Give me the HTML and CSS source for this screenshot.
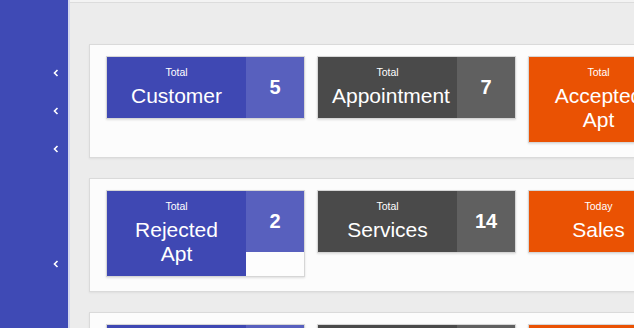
FILE: index.html
```html
<!DOCTYPE html>
<html lang="en">
<head>
  <meta charset="UTF-8">
  <meta name="viewport" content="width=device-width, initial-scale=1.0">
  <title>Dashboard</title>
  <link rel="stylesheet" href="styles.css">
</head>
<body>
  <div class="layout">
    <!-- collapsed side menu -->
    <aside class="sidebar">
      <ul class="menu">
        <li class="menu-item"><svg class="chevron" viewBox="0 0 6 8"><polyline points="4.5,1 1.5,4 4.5,7"/></svg></li>
        <li class="menu-item"><svg class="chevron" viewBox="0 0 6 8"><polyline points="4.5,1 1.5,4 4.5,7"/></svg></li>
        <li class="menu-item"><svg class="chevron" viewBox="0 0 6 8"><polyline points="4.5,1 1.5,4 4.5,7"/></svg></li>
        <li class="menu-item"></li>
        <li class="menu-item"></li>
        <li class="menu-item"><svg class="chevron" viewBox="0 0 6 8"><polyline points="4.5,1 1.5,4 4.5,7"/></svg></li>
      </ul>
    </aside>

    <main class="content">
      <div class="topline"></div>

      <section class="panel">
        <div class="stat-card blue">
          <div class="stat-label">
            <div class="stat-period">Total</div>
            <div class="stat-title">Customer</div>
          </div>
          <div class="stat-count">5</div>
        </div>
        <div class="stat-card dark">
          <div class="stat-label">
            <div class="stat-period">Total</div>
            <div class="stat-title">Appointment</div>
          </div>
          <div class="stat-count">7</div>
        </div>
        <div class="stat-card orange">
          <div class="stat-label">
            <div class="stat-period">Total</div>
            <div class="stat-title">Accepted Apt</div>
          </div>
          <div class="stat-count">3</div>
        </div>
      </section>

      <section class="panel">
        <div class="stat-card blue">
          <div class="stat-label">
            <div class="stat-period">Total</div>
            <div class="stat-title">Rejected Apt</div>
          </div>
          <div class="stat-count">2</div>
        </div>
        <div class="stat-card dark">
          <div class="stat-label">
            <div class="stat-period">Total</div>
            <div class="stat-title">Services</div>
          </div>
          <div class="stat-count">14</div>
        </div>
        <div class="stat-card orange">
          <div class="stat-label">
            <div class="stat-period">Today</div>
            <div class="stat-title">Sales</div>
          </div>
          <div class="stat-count">0</div>
        </div>
      </section>

      <section class="panel">
        <div class="stat-card blue">
          <div class="stat-label">
            <div class="stat-period">Total</div>
            <div class="stat-title">Staff</div>
          </div>
          <div class="stat-count">4</div>
        </div>
        <div class="stat-card dark">
          <div class="stat-label">
            <div class="stat-period">Total</div>
            <div class="stat-title">Products</div>
          </div>
          <div class="stat-count">9</div>
        </div>
        <div class="stat-card orange">
          <div class="stat-label">
            <div class="stat-period">Total</div>
            <div class="stat-title">Sales</div>
          </div>
          <div class="stat-count">0</div>
        </div>
      </section>
    </main>
  </div>
</body>
</html>
```

FILE: styles.css
```css
* {
  box-sizing: border-box;
}

html, body {
  margin: 0;
  height: 100%;
  overflow: hidden;
}

body {
  font-family: "Liberation Sans", Arial, sans-serif;
  background-color: #ececec;
  color: #333;
}

.layout {
  display: flex;
  height: 100%;
}

/* Side menu */
.sidebar {
  width: 70px;
  flex: none;
  background-color: #3f4ab5;
  border-right: 2px solid #d4d7ee;
}

.menu {
  list-style: none;
  margin: 0;
  padding: 54px 0 0;
}

.menu-item {
  height: 38px;
  display: flex;
  align-items: center;
  justify-content: flex-end;
  padding-right: 9px;
}

.menu-item:nth-child(6) {
  height: 39px;
}

.chevron {
  width: 6px;
  height: 8px;
  fill: none;
  stroke: #ffffff;
  stroke-width: 1.6;
}

/* Main area */
.content {
  flex: 1;
  min-width: 0;
  overflow: hidden;
  padding: 0 0 0 19px;
}

.topline {
  height: 3px;
  margin-left: -19px;
  border-bottom: 1px solid #dcdcdc;
  background-color: #f3f3f3;
  margin-bottom: 41px;
}

.panel {
  width: 720px;
  height: 114px;
  margin-bottom: 20px;
  padding: 11px 16px;
  display: flex;
  align-items: flex-start;
  gap: 12px;
  background-color: #fcfcfc;
  border: 1px solid #dadada;
  box-shadow: 0 1px 2px rgba(0, 0, 0, 0.06);
}

/* Stat cards */
.stat-card {
  width: 199px;
  flex: none;
  display: flex;
  align-items: flex-start;
  background-color: #fdfdfd;
  border: 1px solid #d6d6d6;
  box-shadow: 0 1px 2px rgba(0, 0, 0, 0.12);
  color: #ffffff;
}

.stat-label {
  width: 139px;
  flex: none;
  align-self: stretch;
  padding: 7px 6px 10px;
  text-align: center;
}

.stat-period {
  font-size: 10.5px;
  line-height: 16px;
}

.stat-title {
  margin-top: 4px;
  font-size: 21px;
  line-height: 24px;
  padding: 0 8px;
}

.stat-count {
  flex: 1;
  height: 61px;
  display: flex;
  align-items: center;
  justify-content: center;
  font-size: 20px;
  font-weight: bold;
}

.blue .stat-label { background-color: #3f48b3; }
.blue .stat-count { background-color: #5860be; }

.dark .stat-label { background-color: #4a4a4a; }
.dark .stat-count { background-color: #606060; }

.orange .stat-label { background-color: #ea5203; }
.orange .stat-count { background-color: #f06a22; }
```
